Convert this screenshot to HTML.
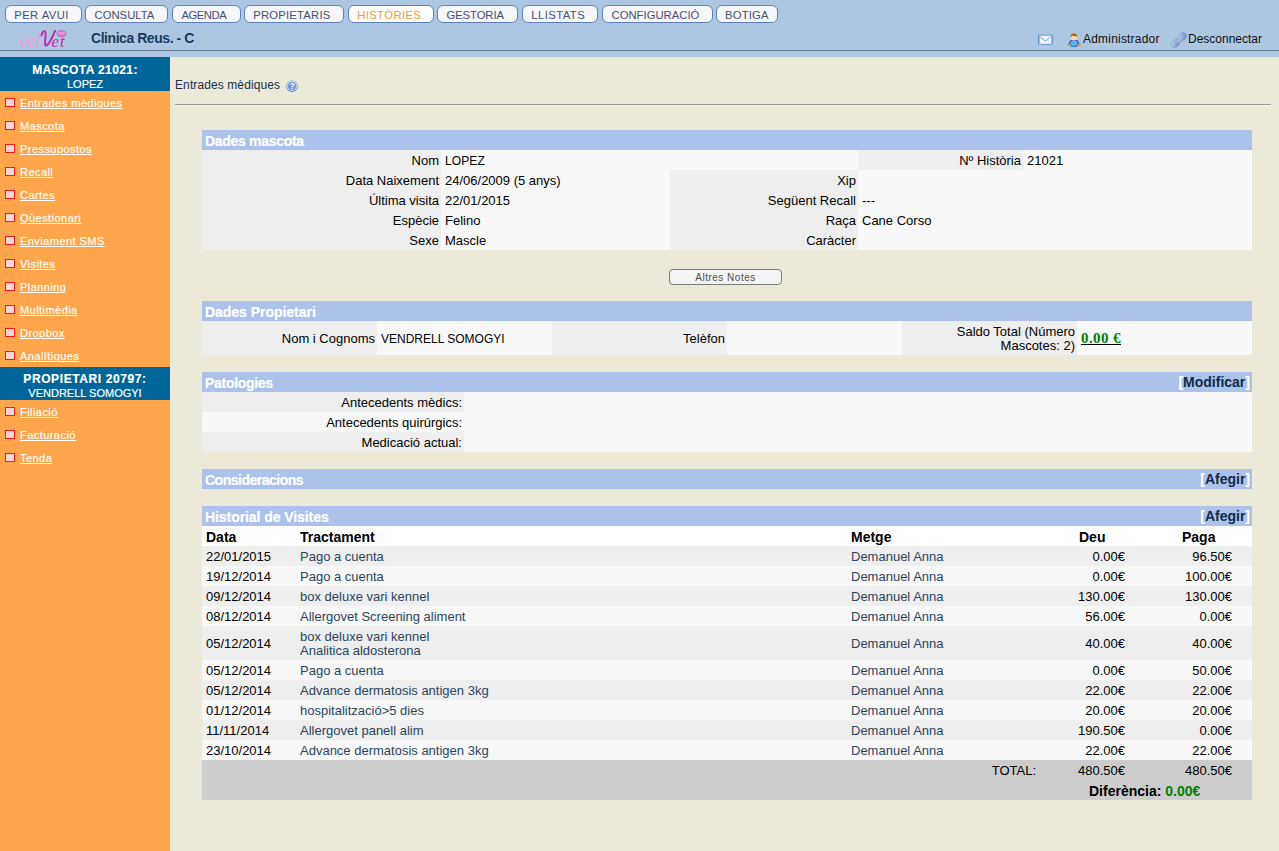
<!DOCTYPE html>
<html><head><meta charset="utf-8">
<style>
*{box-sizing:border-box;margin:0;padding:0}
html,body{width:1279px;height:851px;overflow:hidden;background:#ece9d8;font-family:"Liberation Sans",sans-serif;color:#000}
.a{position:absolute}
.btn{position:absolute;top:5px;height:18px;border:1px solid #5e82b8;border-radius:6px;background:#f5f7fa;color:#4b4f70;font-size:11.3px;line-height:18px;text-align:left;white-space:nowrap}
.btn.on{background:#fff;color:#f39c2e}
.shd{position:absolute;left:0;width:170px;background:#006699}
.sl{position:absolute;left:0;width:170px;text-align:center;color:#fff;white-space:nowrap;line-height:14px;-webkit-text-stroke:0.15px #fff}
.it{position:absolute;left:0;width:170px;height:23px}
.it i{position:absolute;left:5px;top:7px;width:10px;height:9px;border:1px solid #f21b1b;background:#ffd3d3}
.it span{position:absolute;left:20px;top:1px;font-size:11px;letter-spacing:0.45px;line-height:23px;color:#fffdf4;text-decoration:underline;white-space:nowrap;-webkit-text-stroke:0.2px #fffdf4}
.t{position:absolute;white-space:nowrap;font-size:13px;line-height:14px}
.sec{position:absolute;left:202px;width:1050px;height:20px;background:#adc2ea}
.sec .ttl{position:absolute;left:3px;top:0.5px;font-size:14px;font-weight:700;color:#fff;line-height:20px;white-space:nowrap;-webkit-text-stroke:0.2px #fff}
.sec .lnk{position:absolute;right:2px;top:0;font-size:14px;font-weight:700;color:#0b2c4f;line-height:20px;white-space:nowrap}
.sec .lnk em{font-style:normal;color:#fff}
.c{position:absolute;height:20px}
.g{background:#eeeeee}
.l{background:#f8f8f8}
.lab{position:absolute;text-align:right;font-size:13px;line-height:20px;white-space:nowrap;padding-right:2px}
.val{position:absolute;font-size:13px;line-height:20px;white-space:nowrap;padding-left:4px}
.b14{font-weight:700;font-size:14px}
</style></head><body>
<div class="a" style="left:0;top:0;width:1279px;height:57px;background:#adc7e3"></div>
<div class="a" style="left:0;top:50px;width:1279px;height:1px;background:#6b7f94"></div>
<div class="btn" style="left:5px;width:77px;padding-left:8.20px;letter-spacing:0.43px">PER AVUI</div>
<div class="btn" style="left:85px;width:83px;padding-left:8.50px;letter-spacing:0.00px">CONSULTA</div>
<div class="btn" style="left:172px;width:69px;padding-left:8.40px;letter-spacing:-0.46px">AGENDA</div>
<div class="btn" style="left:244px;width:100px;padding-left:8.20px;letter-spacing:0.20px">PROPIETARIS</div>
<div class="btn on" style="left:348px;width:86px;padding-left:8.20px;letter-spacing:0.35px">HISTÒRIES</div>
<div class="btn" style="left:437px;width:81px;padding-left:8.50px;letter-spacing:-0.10px">GESTORIA</div>
<div class="btn" style="left:522px;width:76px;padding-left:8.30px;letter-spacing:0.43px">LLISTATS</div>
<div class="btn" style="left:602px;width:111px;padding-left:8.50px;letter-spacing:0.00px">CONFIGURACIÓ</div>
<div class="btn" style="left:716px;width:62px;padding-left:8.10px;letter-spacing:0.16px">BOTIGA</div>
<svg class="a" style="left:10px;top:24px" width="70" height="26" viewBox="0 0 70 26"><text x="9" y="22.5" font-family="Liberation Serif" font-style="italic" font-size="18.5" fill="#eb9ddb" letter-spacing="0">vel</text><path d="M31.5 11.5 C31.8 8.5 33.5 6.8 34.8 7.2 C36.2 7.8 35.6 12 35.2 16 C34.9 19 35.2 21.5 36 21.8 C38.5 21 42.5 13 45 7" fill="none" stroke="#c42cad" stroke-width="2" stroke-linecap="round"/><text x="41.5" y="22.5" font-family="Liberation Serif" font-style="italic" font-size="16.5" fill="#c42cad" letter-spacing="1.2">et</text><ellipse cx="51.5" cy="9.6" rx="4.3" ry="2.9" fill="#e07fcf" stroke="#c84db8" stroke-width="0.8"/><path d="M48 9.6 Q51.5 8 55 9.6" stroke="#f3c0ea" stroke-width="0.8" fill="none"/></svg>
<div class="a" style="left:91px;top:30px;font-size:14px;letter-spacing:-0.45px;font-weight:700;color:#1b3a5c;line-height:16px;white-space:nowrap">Clinica Reus. - C</div>
<div class="a" style="left:0;top:57px;width:170px;height:794px;background:#ffa54c"></div>
<div class="shd" style="top:57px;height:34px"></div>
<div class="sl" style="top:63px;font-size:12px;font-weight:700;letter-spacing:0.4px">MASCOTA 21021:</div>
<div class="sl" style="top:77px;font-size:11px">LOPEZ</div>
<div class="it" style="top:91px"><i></i><span>Entrades mèdiques</span></div>
<div class="it" style="top:114px"><i></i><span>Mascota</span></div>
<div class="it" style="top:137px"><i></i><span>Pressupostos</span></div>
<div class="it" style="top:160px"><i></i><span>Recall</span></div>
<div class="it" style="top:183px"><i></i><span>Cartes</span></div>
<div class="it" style="top:206px"><i></i><span>Qüestionari</span></div>
<div class="it" style="top:229px"><i></i><span>Enviament SMS</span></div>
<div class="it" style="top:252px"><i></i><span>Visites</span></div>
<div class="it" style="top:275px"><i></i><span>Planning</span></div>
<div class="it" style="top:298px"><i></i><span>Multimèdia</span></div>
<div class="it" style="top:321px"><i></i><span>Dropbox</span></div>
<div class="it" style="top:344px"><i></i><span>Analítiques</span></div>
<div class="shd" style="top:367px;height:33px"></div>
<div class="sl" style="top:372px;font-size:12px;font-weight:700;letter-spacing:0.6px">PROPIETARI 20797:</div>
<div class="sl" style="top:386px;font-size:11px">VENDRELL SOMOGYI</div>
<div class="it" style="top:400px"><i></i><span>Filiació</span></div>
<div class="it" style="top:423px"><i></i><span>Facturació</span></div>
<div class="it" style="top:446px"><i></i><span>Tenda</span></div>
<svg class="a" style="left:1038px;top:34px" width="15" height="11" viewBox="0 0 15 11"><rect x="0.6" y="1.1" width="13.8" height="9.2" rx="0.8" fill="#f3f8fe" stroke="#7aa0d8" stroke-width="1.2"/><path d="M0.9 1.4 L0.9 10" stroke="#5a86cc" stroke-width="1"/><path d="M14.1 1.4 L14.1 10" stroke="#5a86cc" stroke-width="1"/><path d="M2 2.6 L7.5 7 L13 2.6" fill="none" stroke="#8fb3e6" stroke-width="1.1"/><path d="M1.5 9.5 L5.5 6.5 M13.5 9.5 L9.5 6.5" stroke="#cfe0f7" stroke-width="0.8"/></svg>
<svg class="a" style="left:1067px;top:33px" width="14" height="14" viewBox="0 0 14 14"><path d="M1.6 11.6 L4.2 7.8 M12.4 11.6 L9.8 7.8" stroke="#2c5fc2" stroke-width="1.6" stroke-linecap="round"/><rect x="3" y="7.4" width="8" height="6" rx="2" fill="#5ab3f6" stroke="#2c5fc2" stroke-width="0.9"/><circle cx="1.6" cy="11.8" r="1.4" fill="#f39a2b"/><circle cx="12.4" cy="11.8" r="1.4" fill="#f39a2b"/><circle cx="7" cy="4.2" r="3.3" fill="#f9d9b4"/><path d="M3.7 4.6 C3.4 1.2 5.5 0.6 7 0.6 C8.6 0.6 10.6 1.3 10.3 4.4 C9.6 3 8.5 2.6 7.6 3.2 C6.5 2.4 4.6 2.8 3.7 4.6Z" fill="#b4561a"/></svg>
<div class="t" style="left:1083px;top:32px;font-size:12px;color:#111;letter-spacing:0.2px">Administrador</div>
<svg class="a" style="left:1171px;top:32px" width="16" height="16" viewBox="0 0 16 16"><defs><linearGradient id="pg" x1="0" y1="0" x2="1" y2="1"><stop offset="0" stop-color="#d2e2f8"/><stop offset="0.5" stop-color="#8db0e4"/><stop offset="1" stop-color="#5583c8"/></linearGradient></defs><ellipse cx="11.4" cy="4.6" rx="4.4" ry="3.6" transform="rotate(-45 11.4 4.6)" fill="url(#pg)" stroke="#6c95d0" stroke-width="0.5"/><ellipse cx="4.6" cy="11.4" rx="5" ry="3.5" transform="rotate(-45 4.6 11.4)" fill="url(#pg)" stroke="#6c95d0" stroke-width="0.5"/><rect x="6.4" y="5.2" width="3.2" height="5.6" transform="rotate(45 8 8)" fill="#a9a9a4"/><rect x="7.6" y="5.2" width="0.8" height="5.6" transform="rotate(45 8 8)" fill="#d8d8d0"/></svg>
<div class="t" style="left:1188px;top:32px;font-size:12px;color:#111">Desconnectar</div>
<div class="t" style="left:175px;top:78px;font-size:12px;color:#1b2f4a;letter-spacing:0.1px">Entrades mèdiques</div>
<svg class="a" style="left:286px;top:80px" width="12" height="13" viewBox="0 0 12 13"><defs><linearGradient id="hg" x1="0" y1="0" x2="0" y2="1"><stop offset="0" stop-color="#b9d1f2"/><stop offset="1" stop-color="#5d8bc9"/></linearGradient></defs><circle cx="6" cy="6.1" r="6" fill="url(#hg)"/><circle cx="6" cy="6.1" r="4.9" fill="#d3e3f7"/><circle cx="6" cy="6.1" r="4" fill="#6996d1"/><text x="6" y="9.3" font-size="8.5" font-weight="700" text-anchor="middle" fill="#fff" font-family="Liberation Sans">?</text></svg>
<div class="a" style="left:175px;top:104px;width:1096px;height:1px;background:#9a9a9a"></div>
<div class="a" style="left:175px;top:105px;width:1096px;height:1px;background:#f7f5ee"></div>
<div class="sec" style="top:130px"><span class="ttl" style="letter-spacing:-0.3px">Dades mascota</span></div>
<div class="c g" style="left:202px;top:150px;width:239px;height:20px"></div>
<div class="c l" style="left:441px;top:150px;width:417px;height:20px"></div>
<div class="c g" style="left:858px;top:150px;width:165px;height:20px"></div>
<div class="c l" style="left:1023px;top:150px;width:229px;height:20px"></div>
<div class="lab" style="right:838px;top:151px;line-height:20px;">Nom</div>
<div class="val " style="left:441px;top:151px;line-height:20px;font-size:12px;letter-spacing:0.1px">LOPEZ</div>
<div class="lab" style="right:256px;top:151px;line-height:20px;">Nº Història</div>
<div class="val " style="left:1023px;top:151px;line-height:20px;">21021</div>
<div class="c g" style="left:202px;top:170px;width:239px;height:20px"></div>
<div class="c l" style="left:441px;top:170px;width:229px;height:20px"></div>
<div class="c g" style="left:670px;top:170px;width:188px;height:20px"></div>
<div class="c l" style="left:858px;top:170px;width:394px;height:20px"></div>
<div class="lab" style="right:838px;top:171px;line-height:20px;">Data Naixement</div>
<div class="val " style="left:441px;top:171px;line-height:20px;">24/06/2009 (5 anys)</div>
<div class="lab" style="right:421px;top:171px;line-height:20px;">Xip</div>
<div class="val " style="left:858px;top:171px;line-height:20px;"></div>
<div class="c g" style="left:202px;top:190px;width:239px;height:20px"></div>
<div class="c l" style="left:441px;top:190px;width:229px;height:20px"></div>
<div class="c g" style="left:670px;top:190px;width:188px;height:20px"></div>
<div class="c l" style="left:858px;top:190px;width:394px;height:20px"></div>
<div class="lab" style="right:838px;top:191px;line-height:20px;">Última visita</div>
<div class="val " style="left:441px;top:191px;line-height:20px;">22/01/2015</div>
<div class="lab" style="right:421px;top:191px;line-height:20px;">Següent Recall</div>
<div class="val " style="left:858px;top:191px;line-height:20px;">---</div>
<div class="c g" style="left:202px;top:210px;width:239px;height:20px"></div>
<div class="c l" style="left:441px;top:210px;width:229px;height:20px"></div>
<div class="c g" style="left:670px;top:210px;width:188px;height:20px"></div>
<div class="c l" style="left:858px;top:210px;width:394px;height:20px"></div>
<div class="lab" style="right:838px;top:211px;line-height:20px;">Espècie</div>
<div class="val " style="left:441px;top:211px;line-height:20px;">Felino</div>
<div class="lab" style="right:421px;top:211px;line-height:20px;">Raça</div>
<div class="val " style="left:858px;top:211px;line-height:20px;">Cane Corso</div>
<div class="c g" style="left:202px;top:230px;width:239px;height:20px"></div>
<div class="c l" style="left:441px;top:230px;width:229px;height:20px"></div>
<div class="c g" style="left:670px;top:230px;width:188px;height:20px"></div>
<div class="c l" style="left:858px;top:230px;width:394px;height:20px"></div>
<div class="lab" style="right:838px;top:231px;line-height:20px;">Sexe</div>
<div class="val " style="left:441px;top:231px;line-height:20px;">Mascle</div>
<div class="lab" style="right:421px;top:231px;line-height:20px;">Caràcter</div>
<div class="val " style="left:858px;top:231px;line-height:20px;"></div>
<div class="a" style="left:669px;top:269px;width:113px;height:16px;border:1px solid #7a7a7a;border-radius:4px;background:#f4f4f4;font-size:10px;letter-spacing:0.5px;line-height:15px;text-align:center;color:#4a4a55">Altres Notes</div>
<div class="sec" style="top:301px"><span class="ttl" style="letter-spacing:-0.03px">Dades Propietari</span></div>
<div class="c g" style="left:202px;top:321px;width:175px;height:34px"></div>
<div class="c l" style="left:377px;top:321px;width:175px;height:34px"></div>
<div class="c g" style="left:552px;top:321px;width:175px;height:34px"></div>
<div class="c l" style="left:727px;top:321px;width:175px;height:34px"></div>
<div class="c g" style="left:902px;top:321px;width:175px;height:34px"></div>
<div class="c l" style="left:1077px;top:321px;width:175px;height:34px"></div>
<div class="lab" style="right:902px;top:322px;line-height:34px;">Nom i Cognoms</div>
<div class="val " style="left:377px;top:322px;line-height:34px;font-size:12px">VENDRELL SOMOGYI</div>
<div class="lab" style="right:552px;top:322px;line-height:34px;">Telèfon</div>
<div class="lab" style="right:202px;top:325px;line-height:14px">Saldo Total (Número<br>Mascotes: 2)</div>
<div class="val " style="left:1077px;top:321px;line-height:34px;font-family:'Liberation Serif',serif;font-weight:700;font-size:15px;letter-spacing:0.4px;text-decoration:underline;color:#000"><span style="color:#008000">0.00 €</span></div>
<div class="sec" style="top:372px"><span class="ttl" style="letter-spacing:-0.3px">Patologies</span><span class="lnk"><em>[</em>Modificar<em>]</em></span></div>
<div class="c g" style="left:202px;top:392px;width:262px;height:20px"></div>
<div class="c l" style="left:464px;top:392px;width:788px;height:20px"></div>
<div class="lab" style="right:815px;top:393px;line-height:20px;">Antecedents mèdics:</div>
<div class="c l" style="left:202px;top:412px;width:262px;height:20px"></div>
<div class="c l" style="left:464px;top:412px;width:788px;height:20px"></div>
<div class="lab" style="right:815px;top:413px;line-height:20px;">Antecedents quirúrgics:</div>
<div class="c g" style="left:202px;top:432px;width:262px;height:20px"></div>
<div class="c l" style="left:464px;top:432px;width:788px;height:20px"></div>
<div class="lab" style="right:815px;top:433px;line-height:20px;">Medicació actual:</div>
<div class="sec" style="top:469px"><span class="ttl" style="letter-spacing:-0.5px">Consideracions</span><span class="lnk"><em>[</em>Afegir<em>]</em></span></div>
<div class="sec" style="top:506px"><span class="ttl" style="letter-spacing:-0.07px">Historial de Visites</span><span class="lnk"><em>[</em>Afegir<em>]</em></span></div>
<div class="c " style="left:202px;top:526px;width:1050px;height:20px;background:#fff"></div>
<div class="val b14" style="left:202px;top:527px;line-height:20px;">Data</div>
<div class="val b14" style="left:296px;top:527px;line-height:20px;">Tractament</div>
<div class="val b14" style="left:847px;top:527px;line-height:20px;">Metge</div>
<div class="val b14" style="left:1075px;top:527px;line-height:20px;">Deu</div>
<div class="val b14" style="left:1178px;top:527px;line-height:20px;">Paga</div>
<div class="c g" style="left:202px;top:546px;width:1050px;height:20px"></div>
<div class="val " style="left:202px;top:547px;line-height:20px;">22/01/2015</div>
<div class="val " style="left:296px;top:547px;line-height:20px;color:#2b4560">Pago a cuenta</div>
<div class="val " style="left:847px;top:547px;line-height:20px;color:#2b4560">Demanuel Anna</div>
<div class="lab" style="right:152px;top:547px;line-height:20px;">0.00€</div>
<div class="lab" style="right:45px;top:547px;line-height:20px;">96.50€</div>
<div class="c l" style="left:202px;top:566px;width:1050px;height:20px"></div>
<div class="val " style="left:202px;top:567px;line-height:20px;">19/12/2014</div>
<div class="val " style="left:296px;top:567px;line-height:20px;color:#2b4560">Pago a cuenta</div>
<div class="val " style="left:847px;top:567px;line-height:20px;color:#2b4560">Demanuel Anna</div>
<div class="lab" style="right:152px;top:567px;line-height:20px;">0.00€</div>
<div class="lab" style="right:45px;top:567px;line-height:20px;">100.00€</div>
<div class="c g" style="left:202px;top:586px;width:1050px;height:20px"></div>
<div class="val " style="left:202px;top:587px;line-height:20px;">09/12/2014</div>
<div class="val " style="left:296px;top:587px;line-height:20px;color:#2b4560">box deluxe vari kennel</div>
<div class="val " style="left:847px;top:587px;line-height:20px;color:#2b4560">Demanuel Anna</div>
<div class="lab" style="right:152px;top:587px;line-height:20px;">130.00€</div>
<div class="lab" style="right:45px;top:587px;line-height:20px;">130.00€</div>
<div class="c l" style="left:202px;top:606px;width:1050px;height:20px"></div>
<div class="val " style="left:202px;top:607px;line-height:20px;">08/12/2014</div>
<div class="val " style="left:296px;top:607px;line-height:20px;color:#2b4560">Allergovet Screening aliment</div>
<div class="val " style="left:847px;top:607px;line-height:20px;color:#2b4560">Demanuel Anna</div>
<div class="lab" style="right:152px;top:607px;line-height:20px;">56.00€</div>
<div class="lab" style="right:45px;top:607px;line-height:20px;">0.00€</div>
<div class="c g" style="left:202px;top:626px;width:1050px;height:34px"></div>
<div class="val " style="left:202px;top:627px;line-height:34px;">05/12/2014</div>
<div class="val" style="left:296px;top:630px;line-height:14px;color:#2b4560">box deluxe vari kennel<br>Analitica aldosterona</div>
<div class="val " style="left:847px;top:627px;line-height:34px;color:#2b4560">Demanuel Anna</div>
<div class="lab" style="right:152px;top:627px;line-height:34px;">40.00€</div>
<div class="lab" style="right:45px;top:627px;line-height:34px;">40.00€</div>
<div class="c l" style="left:202px;top:660px;width:1050px;height:20px"></div>
<div class="val " style="left:202px;top:661px;line-height:20px;">05/12/2014</div>
<div class="val " style="left:296px;top:661px;line-height:20px;color:#2b4560">Pago a cuenta</div>
<div class="val " style="left:847px;top:661px;line-height:20px;color:#2b4560">Demanuel Anna</div>
<div class="lab" style="right:152px;top:661px;line-height:20px;">0.00€</div>
<div class="lab" style="right:45px;top:661px;line-height:20px;">50.00€</div>
<div class="c g" style="left:202px;top:680px;width:1050px;height:20px"></div>
<div class="val " style="left:202px;top:681px;line-height:20px;">05/12/2014</div>
<div class="val " style="left:296px;top:681px;line-height:20px;color:#2b4560">Advance dermatosis antigen 3kg</div>
<div class="val " style="left:847px;top:681px;line-height:20px;color:#2b4560">Demanuel Anna</div>
<div class="lab" style="right:152px;top:681px;line-height:20px;">22.00€</div>
<div class="lab" style="right:45px;top:681px;line-height:20px;">22.00€</div>
<div class="c l" style="left:202px;top:700px;width:1050px;height:20px"></div>
<div class="val " style="left:202px;top:701px;line-height:20px;">01/12/2014</div>
<div class="val " style="left:296px;top:701px;line-height:20px;color:#2b4560">hospitalització&gt;5 dies</div>
<div class="val " style="left:847px;top:701px;line-height:20px;color:#2b4560">Demanuel Anna</div>
<div class="lab" style="right:152px;top:701px;line-height:20px;">20.00€</div>
<div class="lab" style="right:45px;top:701px;line-height:20px;">20.00€</div>
<div class="c g" style="left:202px;top:720px;width:1050px;height:20px"></div>
<div class="val " style="left:202px;top:721px;line-height:20px;">11/11/2014</div>
<div class="val " style="left:296px;top:721px;line-height:20px;color:#2b4560">Allergovet panell alim</div>
<div class="val " style="left:847px;top:721px;line-height:20px;color:#2b4560">Demanuel Anna</div>
<div class="lab" style="right:152px;top:721px;line-height:20px;">190.50€</div>
<div class="lab" style="right:45px;top:721px;line-height:20px;">0.00€</div>
<div class="c l" style="left:202px;top:740px;width:1050px;height:20px"></div>
<div class="val " style="left:202px;top:741px;line-height:20px;">23/10/2014</div>
<div class="val " style="left:296px;top:741px;line-height:20px;color:#2b4560">Advance dermatosis antigen 3kg</div>
<div class="val " style="left:847px;top:741px;line-height:20px;color:#2b4560">Demanuel Anna</div>
<div class="lab" style="right:152px;top:741px;line-height:20px;">22.00€</div>
<div class="lab" style="right:45px;top:741px;line-height:20px;">22.00€</div>
<div class="c " style="left:202px;top:760px;width:1050px;height:40px;background:#cccccc"></div>
<div class="lab" style="right:241px;top:761px;line-height:20px;">TOTAL:</div>
<div class="lab" style="right:152px;top:761px;line-height:20px;">480.50€</div>
<div class="lab" style="right:45px;top:761px;line-height:20px;">480.50€</div>
<div class="val b14" style="left:1085px;top:781px;line-height:20px;">Diferència: <span style="color:#008000">0.00€</span></div>
</body></html>
